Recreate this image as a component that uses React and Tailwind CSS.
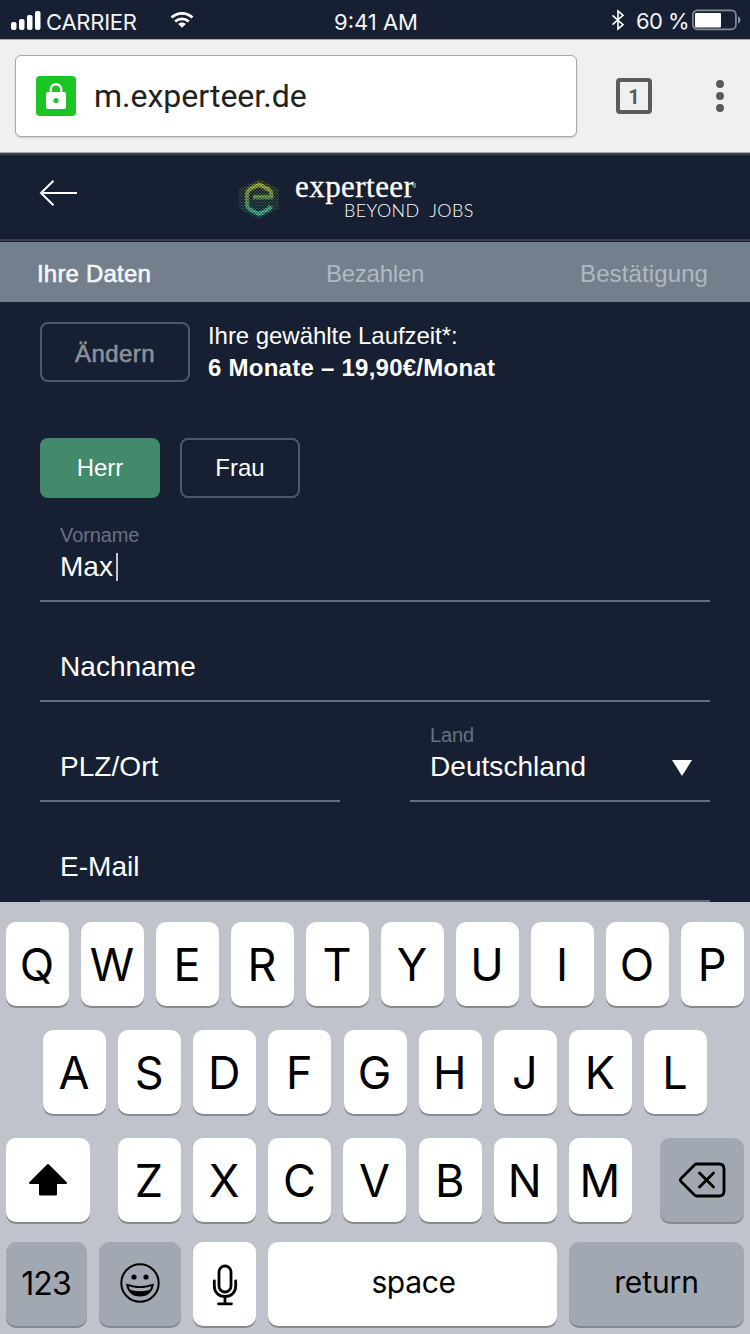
const sans = "font-['Liberation_Sans',sans-serif]";
const inter = "font-['Inter',sans-serif]";

function StatusBar() {
  return (
    <div className={`${inter} flex h-[39px] items-center text-[22px] leading-none text-[#f4f5f7]`}>
      <svg className="ml-[10px] mt-[1px] h-[20px] w-[32px]" viewBox="0 0 32 20" fill="#fff">
        <rect x="1" y="12" width="5.5" height="8" rx="2" />
        <rect x="9" y="9" width="5.5" height="11" rx="2" />
        <rect x="17" y="5" width="5.5" height="15" rx="2" />
        <rect x="25" y="1" width="5.5" height="19" rx="2" />
      </svg>
      <span className="ml-[4px] mt-[5px] w-[123px] tracking-[-0.25px]">CARRIER</span>
      <svg className="h-[18px] w-[26px]" viewBox="0 0 26 18" fill="none" stroke="#fff" strokeWidth="2.7">
        <path d="M2.5 6.6C8.5 .9 17.5 .9 23.5 6.6" />
        <path d="M6.2 10.5C10.2 6.9 15.8 6.9 19.8 10.5" />
        <path d="M13 16.8L9.2 13.1C11.2 11.1 14.8 11.1 16.8 13.1Z" fill="#fff" stroke="none" />
      </svg>
      <span className="ml-[139px] mt-[5px] w-[277px] tracking-[0px]">9:41 AM</span>
      <svg className="h-[22px] w-[14px]" viewBox="0 0 14 22" fill="none" stroke="#fff" strokeWidth="1.6">
        <path d="M1.5 6.3L12 15.7L7 20V2L12 6.3L1.5 15.7" />
      </svg>
      <span className="ml-[11px] mt-[3px] w-[56px] whitespace-nowrap tracking-[-0.6px]">60 %</span>
      <svg className="h-[22px] w-[49px]" viewBox="0 0 49 22">
        <rect x="0.9" y="1.3" width="43" height="19" rx="4.5" fill="none" stroke="#858b97" strokeWidth="1.7" />
        <rect x="3" y="4" width="26" height="14.5" rx="1" fill="#fff" />
        <path d="M46 7.2Q48.5 8 48.5 11T46 14.8Z" fill="#858b97" />
      </svg>
    </div>
  );
}

function BrowserBar() {
  return (
    <div className="flex h-[114px] items-start border-y border-[#a8a9ab] bg-[#f0f0f0] pl-[15px] pt-[15px] font-['Roboto',sans-serif]">
      <div className="flex h-[82px] w-[562px] items-center rounded-[6px] border border-[#a9a9a9] bg-white pl-[20px] shadow-[0_1px_2px_rgba(0,0,0,0.15)]">
        <div className="flex h-10 w-10 items-center justify-center rounded-[4px] bg-[#1bc524]">
          <svg className="h-[28px] w-[22px]" viewBox="0 0 22 28">
            <path d="M5.8 12V7.5a5.2 5.2 0 0 1 10.4 0V12" fill="none" stroke="#fff" strokeWidth="2.4" />
            <rect x="1" y="10" width="20" height="17" rx="2" fill="#fff" />
            <circle cx="11" cy="18.5" r="2.6" fill="#1bc524" />
          </svg>
        </div>
        <span className="ml-[18px] text-[32px] leading-none tracking-[0px] text-[#212121]">m.experteer.de</span>
      </div>
      <div className="ml-[39px] mt-[23px] flex h-9 w-9 items-center justify-center rounded-[4px] border-4 border-[#5a5a5a] text-[20px] font-bold leading-none text-[#5a5a5a]">
        <span className="mt-[2px]">1</span>
      </div>
      <div className="ml-[64px] mt-[25px] flex flex-col gap-1">
        <i className="h-2 w-2 rounded-full bg-[#5a5a5a]" />
        <i className="h-2 w-2 rounded-full bg-[#5a5a5a]" />
        <i className="h-2 w-2 rounded-full bg-[#5a5a5a]" />
      </div>
    </div>
  );
}

function Hexagon() {
  const letter = "M15 19H33.5C33.5 14 33 13 30 11L21 6.5L13 10.5Q9 12.5 9 17V26Q9 30 13 32L21 36L29 32Q32 30.5 33 28";
  return (
    <svg className="h-[42px] w-[42px]" viewBox="0 0 42 42">
      <defs>
        <linearGradient id="glow" gradientUnits="userSpaceOnUse" x1="0" y1="6" x2="0" y2="38">
          <stop offset="0" stopColor="#c3cb34" />
          <stop offset="0.5" stopColor="#6fae55" />
          <stop offset="1" stopColor="#3fcfa8" />
        </linearGradient>
        <pattern id="dots" width="3" height="3" patternUnits="userSpaceOnUse">
          <rect x="0" y="0" width="1.5" height="1" fill="#fff" />
          <rect x="1.5" y="1.5" width="1.5" height="1" fill="#fff" />
        </pattern>
        <mask id="grid" maskUnits="userSpaceOnUse" x="0" y="0" width="42" height="42">
          <rect width="42" height="42" fill="url(#dots)" />
        </mask>
      </defs>
      <path d="M21 1L41 11V31L21 41L1 31V11Z" fill="url(#glow)" opacity="0.38" mask="url(#grid)" />
      <path d={letter} fill="none" stroke="url(#glow)" strokeWidth="3.4" strokeLinejoin="round" opacity="0.5" />
      <path d={letter} fill="none" stroke="url(#glow)" strokeWidth="4.8" strokeLinejoin="round" mask="url(#grid)" />
    </svg>
  );
}

function Header() {
  return (
    <header className="flex h-[88px] items-start border-b-2 border-[#3a3d46] bg-linear-to-b from-[#4a505c] from-0% to-[#162032] to-4%">
      <svg className="ml-[39px] mt-[26px] h-[28px] w-[40px]" viewBox="0 0 40 28" fill="none" stroke="#fff" strokeWidth="2">
        <path d="M38 14H2M14.5 1.8L2 14L14.5 26.2" />
      </svg>
      <div className="ml-[159px] mt-[25px]">
        <Hexagon />
      </div>
      <div className="ml-[15px] mt-[20px]">
        <div className="relative flex h-[28px] items-center font-['Liberation_Serif',serif] text-[31px] leading-[28px] tracking-[0.45px] text-white [-webkit-text-stroke:0.3px_#fff]">
          <span>experteer</span>
          <i className="absolute left-[118px] top-[10px] h-[5px] w-[3px] bg-[#43896b]" />
        </div>
        <div className="ml-[49px] flex gap-[10px] font-['Lato',sans-serif] text-[18px] font-light leading-[18px] tracking-[0.35px] text-white">
          <span>BEYOND</span>
          <span>JOBS</span>
        </div>
      </div>
    </header>
  );
}

function Tabs() {
  return (
    <nav className="mt-px flex h-[60px] items-center bg-[#737f8c] pl-[37px] pt-[4px] text-[24px] leading-none text-[#b0b8c1]">
      <span className="w-[289px] tracking-[0.2px] text-[#f4f6f8] [-webkit-text-stroke:0.6px_#f4f6f8]">Ihre Daten</span>
      <span className="w-[254px] tracking-[-0.25px]">Bezahlen</span>
      <span className="tracking-[0.12px]">Bestätigung</span>
    </nav>
  );
}

function Field({ label, value, caret, arrow, className = "" }) {
  return (
    <div className={`flex h-[100px] flex-col justify-end border-b-2 border-[#636e7d] px-5 ${className}`}>
      {label && <span className="mb-[8px] text-[20px] leading-[20px] tracking-[-0.1px] text-[#677281]">{label}</span>}
      <div className="mb-[19px] flex h-[28px] items-center text-[28px] leading-[28px] text-white">
        <span className="tracking-[0.05px]">{value}</span>
        {caret && <i className="ml-[3px] h-[28px] w-[2px] bg-[#c5c8cc]" />}
        {arrow && (
          <svg className="ml-auto mr-[-2px] mt-[1px] h-4 w-5" viewBox="0 0 20 16" fill="#fff">
            <path d="M0 0H20L10 16Z" />
          </svg>
        )}
      </div>
    </div>
  );
}

function Form() {
  return (
    <main className="flex h-[600px] flex-col px-10 pt-[20px]">
      <div className="flex gap-[18px]">
        <button className="h-[60px] w-[150px] rounded-[8px] border-2 border-[#4f5866] pt-[3px] text-[24px] leading-none tracking-[0.4px] text-[#8b9099] [-webkit-text-stroke:0.6px_#8b9099]">
          Ändern
        </button>
        <div className="whitespace-nowrap text-[24px] leading-[32px] text-white">
          <div className="mt-[-2px] tracking-[-0.05px]">Ihre gewählte Laufzeit*:</div>
          <div className="font-bold tracking-[0.25px]">6 Monate – 19,90€/Monat</div>
        </div>
      </div>
      <div className="mt-[54px] flex gap-5 text-[24px] leading-none text-white">
        <button className="h-[60px] w-[120px] rounded-[8px] bg-[#43896b]">Herr</button>
        <button className="h-[60px] w-[120px] rounded-[8px] border-2 border-[#4f5866]">Frau</button>
      </div>
      <Field className="mt-[4px]" label="Vorname" value="Max" caret />
      <Field value="Nachname" />
      <div className="flex justify-between">
        <Field className="w-[300px]" value="PLZ/Ort" />
        <Field className="w-[300px]" label="Land" value="Deutschland" arrow />
      </div>
      <Field value="E-Mail" />
    </main>
  );
}

function Key({ children, className = "", dark }) {
  return (
    <div
      className={`flex h-[84px] items-center justify-center rounded-[10px] text-black shadow-[0_2px_0_#87898e] ${dark ? "bg-[#a1a8b2]" : "bg-white"} ${className}`}
    >
      {children}
    </div>
  );
}

function Letters({ keys }) {
  return keys.split("").map((k) => (
    <Key key={k} className="w-[63px] pr-[1px] pt-[1px] text-[45px] leading-none">
      {k}
    </Key>
  ));
}

function Keyboard() {
  return (
    <div className={`${inter} h-[432px] bg-[#bfc3cb] px-[6px] pt-5`}>
      <div className="flex justify-between">
        <Letters keys="QWERTYUIOP" />
      </div>
      <div className="mt-6 flex justify-between px-[37px]">
        <Letters keys="ASDFGHJKL" />
      </div>
      <div className="mt-6 flex justify-between">
        <Key className="w-[84px]">
          <svg className="h-[34px] w-[40px]" viewBox="0 0 40 34">
            <path d="M20 2L38 20H28V31.5H12V20H2Z" fill="#000" stroke="#000" strokeWidth="2" strokeLinejoin="round" />
          </svg>
        </Key>
        <div className="flex w-[514px] justify-between">
          <Letters keys="ZXCVBNM" />
        </div>
        <Key dark className="w-[84px]">
          <svg className="h-[36px] w-[48px]" viewBox="0 0 48 36" fill="none" stroke="#000" strokeWidth="2.8" strokeLinejoin="round" strokeLinecap="round">
            <path d="M18.5 2H41Q46 2 46 7V29Q46 34 41 34H18.5Q17.5 34 16.5 33L3 19.5Q1.8 18 3 16.5L16.5 3Q17.5 2 18.5 2Z" />
            <path d="M21.5 11L35.5 25M35.5 11L21.5 25" />
          </svg>
        </Key>
      </div>
      <div className="mt-5 flex gap-3">
        <Key dark className="w-[81px] pr-[1px] text-[32px] leading-none tracking-[-0.9px]">123</Key>
        <Key dark className="w-[82px] pb-[2px]">
          <svg className="h-[40px] w-[40px]" viewBox="0 0 40 40">
            <circle cx="20" cy="20" r="18.7" fill="none" stroke="#000" strokeWidth="2" />
            <circle cx="14" cy="14" r="2.6" />
            <circle cx="26" cy="14" r="2.6" />
            <path d="M6.8 21.3C15 24.4 25 24.4 33.2 21.3C32.5 28.5 27.3 33 20 33S7.5 28.5 6.8 21.3Z" stroke="#000" strokeWidth="1.2" strokeLinejoin="round" />
            <path d="M8.6 23.2C15.5 25.6 24.5 25.6 31.4 23.2C30.9 24.9 30.3 26 29.2 27.1C23.5 28.7 16.5 28.7 10.8 27.1C9.7 26 9.1 24.9 8.6 23.2Z" fill="#a1a8b2" />
          </svg>
        </Key>
        <Key className="w-[63px]">
          <svg className="mt-[2px] h-[42px] w-[26px]" viewBox="0 0 26 42" fill="none" stroke="#000" strokeWidth="2.8" strokeLinecap="round">
            <rect x="7" y="2" width="12" height="26" rx="6" />
            <path d="M2.3 17V22C2.3 28.5 7 32.5 13 32.5S23.7 28.5 23.7 22V17M13 33V39.5M6.5 39.8H19.5" />
          </svg>
        </Key>
        <Key className="w-[289px] pb-[4px] pl-[2px] text-[30px] leading-none tracking-[-0.35px]">space</Key>
        <Key dark className="w-[175px] pb-[4px] text-[30px] leading-none tracking-[-0.1px]">return</Key>
      </div>
    </div>
  );
}

export default function App() {
  return (
    <div className={`${sans} h-[1334px] w-[750px] overflow-hidden bg-[#162032]`}>
      <StatusBar />
      <BrowserBar />
      <Header />
      <Tabs />
      <Form />
      <Keyboard />
    </div>
  );
}
